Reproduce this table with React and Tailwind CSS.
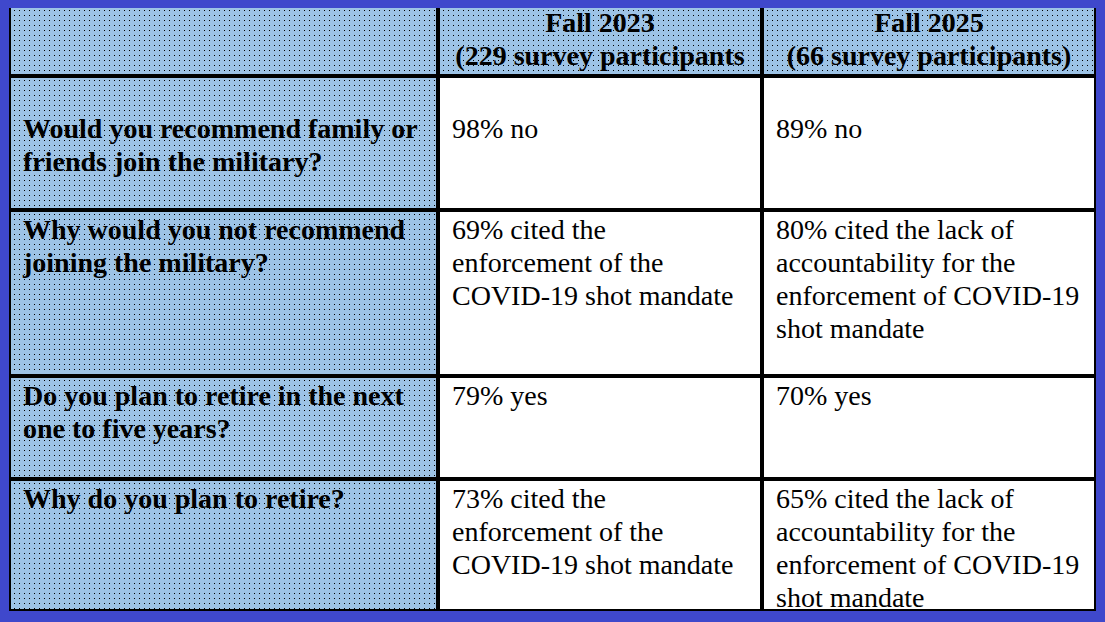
import React from 'react';

const rows = [
    {
        q: 'Would you recommend family or friends join the military?',
        a: '98% no',
        b: '89% no',
        first: true,
    },
    {
        q: 'Why would you not recommend joining the military?',
        a: '69% cited the enforcement of the COVID-19 shot mandate',
        b: '80% cited the lack of accountability for the enforcement of COVID-19 shot mandate',
    },
    {
        q: 'Do you plan to retire in the next one to five years?',
        a: '79% yes',
        b: '70% yes',
    },
    {
        q: 'Why do you plan to retire?',
        a: '73% cited the enforcement of the COVID-19 shot mandate',
        b: '65% cited the lack of accountability for the enforcement of COVID-19 shot mandate',
    },
];

// light blue fill with a 1px black dot every 5px
const dotted = 'bg-[#9dc3e6] bg-[conic-gradient(from_270deg_at_1px_1px,#000_90deg,transparent_0)] bg-size-[5px_5px] bg-position-[3px_2px]';

export default function App() {
    return (
        <div className="w-[1105px] h-[622px] bg-[#3f48cc] pt-[8px] pl-[9px] font-['Liberation_Serif'] text-[28px] leading-[33px] text-black">
            <div className="w-[1087px] grid grid-cols-[425px_320px_330px] grid-rows-[66px_130px_162px_99px_128px] gap-[4px] bg-black border-x-2 border-b-2 border-black">
                <div className={dotted}></div>
                <div className={`${dotted} font-bold text-center`}>
                    <div className="-mt-[2px]">Fall 2023</div>
                    <div>(229 survey participants</div>
                </div>
                <div className={`${dotted} font-bold text-center`}>
                    <div className="-mt-[2px]">Fall 2025</div>
                    <div>(66 survey participants)</div>
                </div>

                {rows.map((r, i) => (
                    <React.Fragment key={i}>
                        <div className={`${dotted} font-bold px-3 ${r.first ? 'pt-[34px]' : 'pt-[1px]'}`}>
                            {r.q}
                        </div>
                        <div className={`bg-white px-3 ${r.first ? 'pt-[34px]' : 'pt-[1px]'}`}>
                            {r.a}
                        </div>
                        <div className={`bg-white px-3 ${r.first ? 'pt-[34px]' : 'pt-[1px]'}`}>
                            {r.b}
                        </div>
                    </React.Fragment>
                ))}
            </div>
        </div>
    );
}
